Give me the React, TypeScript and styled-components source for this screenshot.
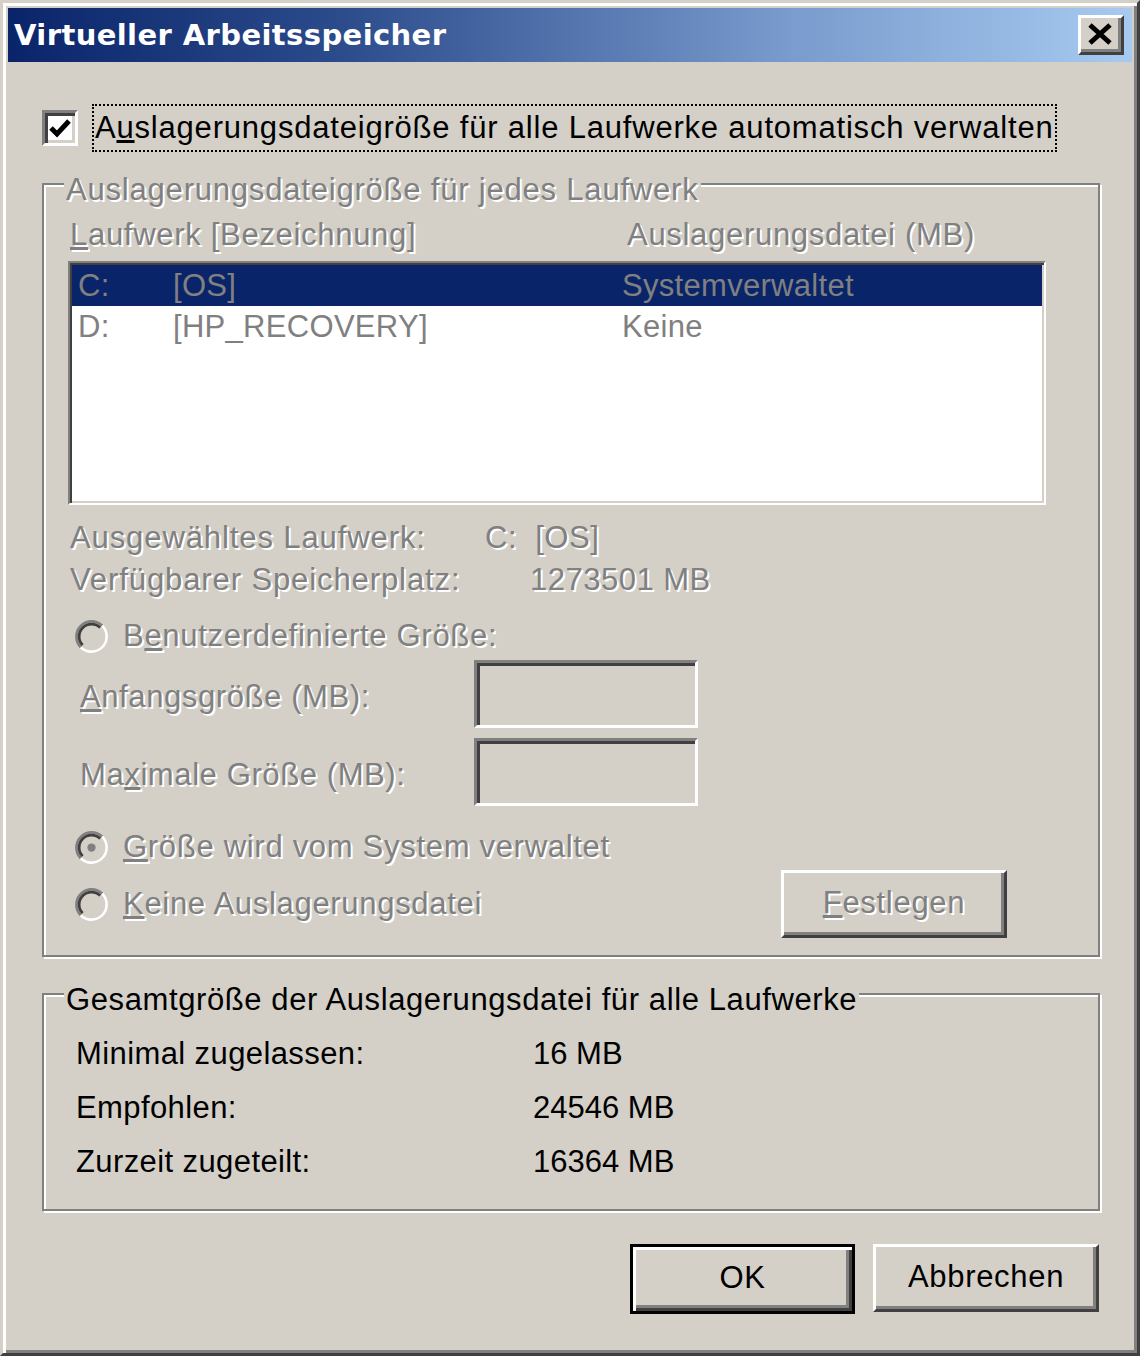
import React from 'react';
import styled, { createGlobalStyle, css } from 'styled-components';

const FACE = '#d4d0c8';
const SHADOW = '#808080';
const DARK = '#404040';
const NAVY = '#0a246a';
const FONT = `"Liberation Sans", Arial, sans-serif`;

const Global = createGlobalStyle`
  html, body { margin: 0; padding: 0; background: ${FACE}; }
  body { font-family: ${FONT}; font-size: 31px; color: #000; letter-spacing: 0.7px; }
  * { box-sizing: border-box; }
`;

const disabledText = css`
  color: ${SHADOW};
  text-shadow: 2px 2px 0 #fff;
`;

const raised = css`
  border: 3px solid;
  border-color: #fff ${DARK} ${DARK} #fff;
  box-shadow: inset -3px -3px 0 ${SHADOW};
  background: ${FACE};
`;

const sunken = css`
  border: 3px solid;
  border-color: ${SHADOW} #fff #fff ${SHADOW};
  box-shadow: inset 3px 3px 0 ${DARK}, inset -3px -3px 0 ${FACE};
`;

const Window = styled.div`
  width: 1140px;
  height: 1356px;
  background: ${FACE};
  border: 3px solid;
  border-color: ${FACE} ${DARK} ${DARK} ${FACE};
  box-shadow: inset 3px 3px 0 #fff, inset -3px -3px 0 ${SHADOW};
  padding: 5px;
  display: flex;
  flex-direction: column;
`;

const TitleBar = styled.div`
  height: 54px;
  flex: none;
  display: flex;
  align-items: center;
  justify-content: space-between;
  padding: 0 8px 0 6px;
  background: linear-gradient(to right, ${NAVY} 0%, #2c4c8c 30%, #7a9cce 70%, #a6caf0 100%);
`;

const TitleText = styled.span`
  font-family: "DejaVu Sans", Verdana, sans-serif;
  font-weight: bold;
  font-size: 29px;
  letter-spacing: 0.4px;
  color: #fff;
  line-height: 40px;
`;

const CloseButton = styled.div`
  ${raised};
  width: 46px;
  height: 40px;
  display: flex;
  align-items: center;
  justify-content: center;
  padding: 0 2px 3px 0;
`;

const Content = styled.div`
  flex: 1;
  display: flex;
  flex-direction: column;
  padding: 42px 32px 0 34px;
`;

const CheckRow = styled.div`
  display: flex;
  align-items: center;
  height: 48px;
  gap: 14px;
`;

const CheckBox = styled.div`
  ${sunken};
  width: 36px;
  height: 36px;
  background: #fff;
  display: flex;
  align-items: center;
  justify-content: center;
`;

const FocusLabel = styled.span`
  border: 2px dotted #000;
  height: 48px;
  line-height: 44px;
  padding: 0 1px;
  white-space: nowrap;
  letter-spacing: 0.8px;
`;

const GroupBox = styled.fieldset<{ $gap: number }>`
  margin: ${(p) => p.$gap}px 0 0 0;
  padding: 0;
  min-width: 0;
  border: 2px solid ${SHADOW};
  box-shadow: inset 2px 2px 0 #fff, 2px 2px 0 #fff;
`;

const GroupLegend = styled.legend<{ $disabled?: boolean }>`
  position: relative;
  top: 6px;
  margin-left: 20px;
  padding: 0 2px;
  line-height: 36px;
  background: ${FACE};
  white-space: nowrap;
  letter-spacing: ${(p) => (p.$disabled ? 0.8 : 0.6)}px;
  ${(p) => p.$disabled && disabledText};
`;

const GroupBody = styled.div<{ $top: number; $bottom: number }>`
  display: flex;
  flex-direction: column;
  padding: ${(p) => p.$top}px 0 ${(p) => p.$bottom}px 0;
`;

const ColumnHeader = styled.div`
  display: grid;
  grid-template-columns: 557px 1fr;
  height: 36px;
  line-height: 36px;
  padding-left: 26px;
  white-space: nowrap;
  ${disabledText};
`;

const ListBox = styled.div`
  margin: 8px 0 0 24px;
  width: 978px;
  height: 244px;
  border: 2px solid;
  border-color: ${SHADOW} #fff #fff ${SHADOW};
  box-shadow: inset 2px 2px 0 ${DARK}, inset -2px -2px 0 ${FACE};
  padding: 2px;
  background: #fff;
`;

const ListRow = styled.div<{ $selected?: boolean }>`
  display: grid;
  grid-template-columns: 95px 449px 1fr;
  height: 41px;
  line-height: 42px;
  padding-left: 6px;
  letter-spacing: 0.3px;
  color: ${SHADOW};
  background: ${(p) => (p.$selected ? NAVY : 'transparent')};
  white-space: nowrap;
`;

const InfoRow = styled.div<{ $labelWidth: number; $top: number }>`
  display: flex;
  height: 42px;
  line-height: 42px;
  margin-top: ${(p) => p.$top}px;
  padding-left: 26px;
  white-space: nowrap;
  letter-spacing: 0.9px;
  ${disabledText};
  & > span:first-child {
    width: ${(p) => p.$labelWidth}px;
    flex: none;
  }
  & > span:last-child {
    letter-spacing: 0.5px;
  }
`;

const RadioRow = styled.div<{ $top: number }>`
  display: flex;
  align-items: center;
  gap: 15px;
  height: 40px;
  margin-top: ${(p) => p.$top}px;
  padding-left: 31px;
  white-space: nowrap;
  letter-spacing: 0.7px;
  ${disabledText};
`;

const RadioLine = styled.div`
  display: flex;
  align-items: center;
  justify-content: space-between;
  height: 68px;
  margin-top: 3px;
  padding-right: 91px;
`;

const FieldRow = styled.div<{ $top: number }>`
  display: flex;
  align-items: center;
  height: 68px;
  margin-top: ${(p) => p.$top}px;
  padding-left: 36px;
  white-space: nowrap;
  & > span {
    width: 394px;
    flex: none;
    padding-top: 5px;
    letter-spacing: 0.6px;
    ${disabledText};
  }
`;

const SunkenInput = styled.div`
  ${sunken};
  width: 224px;
  height: 68px;
  background: ${FACE};
`;

const PushButton = styled.div<{ $default?: boolean; $disabled?: boolean; $width: number }>`
  ${raised};
  width: ${(p) => p.$width}px;
  height: ${(p) => (p.$default ? 70 : 68)}px;
  display: flex;
  align-items: center;
  justify-content: center;
  padding-bottom: 3px;
  white-space: nowrap;
  ${(p) =>
    p.$default &&
    css`
      border-color: #000;
      box-shadow: inset 3px 3px 0 #fff, inset -3px -3px 0 ${DARK}, inset -6px -6px 0 ${SHADOW};
    `};
  ${(p) => p.$disabled && disabledText};
`;

const StatRow = styled.div`
  display: flex;
  height: 54px;
  line-height: 56px;
  padding-left: 32px;
  white-space: nowrap;
  & > span:first-child {
    width: 457px;
    flex: none;
    letter-spacing: 0.4px;
  }
  & > span:last-child {
    letter-spacing: 0;
  }
`;

const ButtonRow = styled.div`
  display: flex;
  justify-content: flex-end;
  gap: 18px;
  margin-top: 33px;
  padding-right: 1px;
`;

const Radio: React.FC<{ checked?: boolean }> = ({ checked }) => (
  <svg width="33" height="33" viewBox="0 0 12 12" style={{ flex: 'none' }}>
    <circle cx="6" cy="6" r="4.2" fill={FACE} />
    <path d="M2.111 9.889 A5.5 5.5 0 0 1 9.889 2.111" stroke={SHADOW} strokeWidth="1" fill="none" />
    <path d="M9.889 2.111 A5.5 5.5 0 0 1 2.111 9.889" stroke="#fff" strokeWidth="1" fill="none" />
    <path d="M2.818 9.182 A4.5 4.5 0 0 1 9.182 2.818" stroke={DARK} strokeWidth="1" fill="none" />
    <path d="M9.182 2.818 A4.5 4.5 0 0 1 2.818 9.182" stroke={FACE} strokeWidth="1" fill="none" />
    {checked && <circle cx="6" cy="6" r="1.5" fill={SHADOW} />}
  </svg>
);

export default function App() {
  return (
    <>
      <Global />
      <Window>
        <TitleBar>
          <TitleText>Virtueller Arbeitsspeicher</TitleText>
          <CloseButton>
            <svg width="26" height="22" viewBox="0 0 26 22">
              <path d="M3 2 L23 20 M23 2 L3 20" stroke="#000" strokeWidth="5" />
            </svg>
          </CloseButton>
        </TitleBar>
        <Content>
          <CheckRow>
            <CheckBox>
              <svg width="22" height="20" viewBox="0 0 22 20">
                <path d="M2 10 L8 16 L20 3" stroke="#000" strokeWidth="5" fill="none" />
              </svg>
            </CheckBox>
            <FocusLabel>
              A<u>u</u>slagerungsdateigröße für alle Laufwerke automatisch verwalten
            </FocusLabel>
          </CheckRow>

          <GroupBox $gap={14}>
            <GroupLegend $disabled>Auslagerungsdateigröße für jedes Laufwerk</GroupLegend>
            <GroupBody $top={15} $bottom={17}>
              <ColumnHeader>
                <span>
                  <u>L</u>aufwerk [Bezeichnung]
                </span>
                <span>Auslagerungsdatei (MB)</span>
              </ColumnHeader>
              <ListBox>
                <ListRow $selected>
                  <span>C:</span>
                  <span>[OS]</span>
                  <span>Systemverwaltet</span>
                </ListRow>
                <ListRow>
                  <span>D:</span>
                  <span>[HP_RECOVERY]</span>
                  <span>Keine</span>
                </ListRow>
              </ListBox>
              <InfoRow $labelWidth={415} $top={12}>
                <span>Ausgewähltes Laufwerk:</span>
                <span>C:&nbsp; [OS]</span>
              </InfoRow>
              <InfoRow $labelWidth={460} $top={0}>
                <span>Verfügbarer Speicherplatz:</span>
                <span>1273501 MB</span>
              </InfoRow>
              <RadioRow $top={15}>
                <Radio />
                <span>
                  B<u>e</u>nutzerdefinierte Größe:
                </span>
              </RadioRow>
              <FieldRow $top={4}>
                <span>
                  <u>A</u>nfangsgröße (MB):
                </span>
                <SunkenInput />
              </FieldRow>
              <FieldRow $top={10}>
                <span>
                  Ma<u>x</u>imale Größe (MB):
                </span>
                <SunkenInput />
              </FieldRow>
              <RadioRow $top={21}>
                <Radio checked />
                <span>
                  <u>G</u>röße wird vom System verwaltet
                </span>
              </RadioRow>
              <RadioLine>
                <RadioRow $top={0}>
                  <Radio />
                  <span>
                    <u>K</u>eine Auslagerungsdatei
                  </span>
                </RadioRow>
                <PushButton $disabled $width={226}>
                  <span>
                    <u>F</u>estlegen
                  </span>
                </PushButton>
              </RadioLine>
            </GroupBody>
          </GroupBox>

          <GroupBox $gap={19}>
            <GroupLegend>Gesamtgröße der Auslagerungsdatei für alle Laufwerke</GroupLegend>
            <GroupBody $top={14} $bottom={21}>
              <StatRow>
                <span>Minimal zugelassen:</span>
                <span>16 MB</span>
              </StatRow>
              <StatRow>
                <span>Empfohlen:</span>
                <span>24546 MB</span>
              </StatRow>
              <StatRow>
                <span>Zurzeit zugeteilt:</span>
                <span>16364 MB</span>
              </StatRow>
            </GroupBody>
          </GroupBox>

          <ButtonRow>
            <PushButton $default $width={225}>
              OK
            </PushButton>
            <PushButton $width={226}>Abbrechen</PushButton>
          </ButtonRow>
        </Content>
      </Window>
    </>
  );
}
